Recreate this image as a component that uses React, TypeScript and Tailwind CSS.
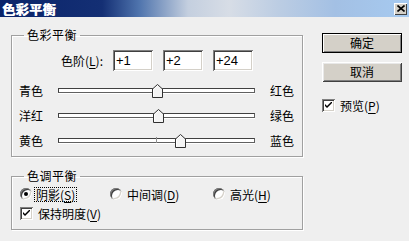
import React from "react";

const FONT = { fontFamily: '"Noto Sans CJK SC", "Noto Sans", sans-serif' };

function U({ children }: { children: React.ReactNode }) {
  return <span className="underline underline-offset-[2px]">{children}</span>;
}

function Thumb() {
  return (
    <svg width="11" height="14" viewBox="0 0 11 14" className="block">
      <path d="M0.5 13.5 V5 L5.5 0.5 L10.5 5 V13.5 Z" fill="#f4f4f4" stroke="#303030" strokeWidth="1" />
      <path d="M1.5 12.5 V5.5 L5.5 1.8" fill="none" stroke="#ffffff" strokeWidth="1" />
    </svg>
  );
}

function SliderRow({ left, right, value }: { left: string; right: string; value: number }) {
  const w = 197;
  const center = w / 2 + (value / 100) * (w / 2);
  return (
    <div className="flex items-center h-[25px] pl-[7px]">
      <div className="w-[39px] leading-[14px]">{left}</div>
      <div className="relative w-[197px] h-[14px] flex items-center">
        <div className="w-full h-[5px] bg-white border border-t-[#404040] border-l-[#404040] border-r-[#606060] border-b-[#606060] shadow-[0_1px_0_#ffffff]" />
        <div className="absolute left-[98px] top-[3px] w-[1px] h-[6px] bg-[#909090]" />
        <div className="absolute top-[0px]" style={{ left: center - 5.5 }}>
          <Thumb />
        </div>
      </div>
      <div className="ml-[15px] leading-[14px]">{right}</div>
    </div>
  );
}

function Radio({ checked }: { checked?: boolean }) {
  return (
    <div className="relative w-[12px] h-[12px] rounded-full bg-white shadow-[inset_1px_1px_0_#808080,inset_-1px_-1px_0_#ffffff,inset_2px_2px_0_#404040,inset_-2px_-2px_0_#d4d0c8]">
      {checked && <div className="absolute left-[4px] top-[4px] w-[4px] h-[4px] rounded-full bg-black" />}
    </div>
  );
}

function Check() {
  return (
    <div className="w-[13px] h-[13px] bg-white flex items-center justify-center shadow-[inset_1px_1px_0_#808080,inset_-1px_-1px_0_#ffffff,inset_2px_2px_0_#404040,inset_-2px_-2px_0_#d4d0c8]">
      <svg width="7" height="7" viewBox="0 0 7 7">
        <path d="M0 2 L0 4 L2 6 L7 1 L7 -1 L2 4 Z" fill="#000" />
      </svg>
    </div>
  );
}

function Input({ v }: { v: string }) {
  return (
    <div
      className="w-[40px] h-[21px] bg-white pl-[3px] flex items-center text-[13px] shadow-[inset_1px_1px_0_#808080,inset_-1px_-1px_0_#ffffff,inset_2px_2px_0_#404040,inset_-2px_-2px_0_#d4d0c8]"
      style={{ fontFamily: '"Liberation Sans", Arial, sans-serif' }}
    >
      {v}
    </div>
  );
}

export default function App() {
  return (
    <div className="w-[409px] h-[241px] bg-[#efefef] flex flex-col text-[12px] text-black overflow-hidden" style={FONT}>
      <div className="h-[17px] flex items-center justify-between bg-[linear-gradient(to_right,#0a246a_0%,#142f74_25%,#4f74ad_34%,#c4cfdf_46%,#d7dde6_56%,#bccde3_68%,#a3c0e4_82%,#a6caf0_100%)]">
        <div className="pl-[2px] text-white font-bold text-[13px] leading-[15px] tracking-[0.5px] [text-shadow:0.7px_0_0_#ffffff]">色彩平衡</div>
        <div className="mr-[2px] w-[13px] h-[12px] bg-[#d4d0c8] flex items-center justify-center shadow-[inset_1px_1px_0_#fff,inset_-1px_-1px_0_#404040]">
          <svg width="8" height="7" viewBox="0 0 8 7">
            <path d="M0.5 0.5 L7.5 6.5 M7.5 0.5 L0.5 6.5" stroke="#000" strokeWidth="1.6" />
          </svg>
        </div>
      </div>
      <div className="flex flex-1">
        <div className="w-[303px] pl-[11px] pt-[11px] flex flex-col">
          <fieldset className="border border-[#a0a0a0] shadow-[inset_1px_1px_0_#ffffff,1px_1px_0_#ffffff] pb-[3px]">
            <legend className="ml-[12px] px-[3px] leading-[14px] tracking-[0.5px]">色彩平衡</legend>
            <div className="flex items-center mt-[8px] gap-[10px]">
              <div className="w-[91px] text-right leading-[14px]">
                色阶(<U>L</U>):
              </div>
              <Input v="+1" />
              <Input v="+2" />
              <Input v="+24" />
            </div>
            <div className="mt-[7px]">
              <SliderRow left="青色" right="红色" value={1} />
              <SliderRow left="洋红" right="绿色" value={2} />
              <SliderRow left="黄色" right="蓝色" value={24} />
            </div>
          </fieldset>
          <fieldset className="mt-[12px] border border-[#a0a0a0] shadow-[inset_1px_1px_0_#ffffff,1px_1px_0_#ffffff] pb-[8px]">
            <legend className="ml-[12px] px-[3px] leading-[14px] tracking-[0.5px]">色调平衡</legend>
            <div className="flex items-center h-[16px] mt-[3px] pl-[8px]">
              <div className="flex items-center w-[90px]">
                <Radio checked />
                <span className="ml-[3px] px-[1px] leading-[13px] outline outline-1 outline-dotted outline-black">
                  阴影(<U>S</U>)
                </span>
              </div>
              <div className="flex items-center w-[103px]">
                <Radio />
                <span className="ml-[5px] leading-[13px]">
                  中间调(<U>D</U>)
                </span>
              </div>
              <div className="flex items-center">
                <Radio />
                <span className="ml-[5px] leading-[13px]">
                  高光(<U>H</U>)
                </span>
              </div>
            </div>
            <div className="flex items-center h-[16px] mt-[3px] pl-[8px]">
              <Check />
              <span className="ml-[5px] leading-[13px]">
                保持明度(<U>V</U>)
              </span>
            </div>
          </fieldset>
        </div>
        <div className="pl-[19px] pt-[16px] flex flex-col">
          <div className="w-[80px] h-[20px] bg-[#d4d0c8] border border-black flex items-center justify-center shadow-[inset_1px_1px_0_#ffffff,inset_-1px_-1px_0_#808080] leading-[14px]">
            确定
          </div>
          <div className="mt-[9px] w-[80px] h-[20px] bg-[#d4d0c8] flex items-center justify-center shadow-[inset_1px_1px_0_#ffffff,inset_-1px_-1px_0_#404040,inset_2px_2px_0_#e8e8e8,inset_-2px_-2px_0_#808080] leading-[14px]">
            取消
          </div>
          <div className="mt-[17px] flex items-center">
            <Check />
            <span className="ml-[5px] leading-[13px]">
              预览(<U>P</U>)
            </span>
          </div>
        </div>
      </div>
    </div>
  );
}
